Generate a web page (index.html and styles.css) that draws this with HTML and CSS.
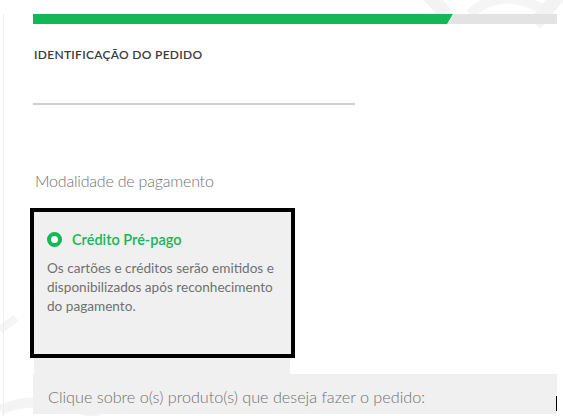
FILE: index.html
```html
<!DOCTYPE html>
<html lang="pt-BR">
<head>
<meta charset="utf-8">
<title>Pedido</title>
<link rel="stylesheet" href="styles.css">
</head>
<body>
<div class="page">
  <svg class="watermark" width="563" height="416" viewBox="0 0 563 416" aria-hidden="true">
    <path d="M424 -10 L446 14" stroke="#f3f3f3" stroke-width="14" fill="none"/>
    <path d="M560 -6 L535 24" stroke="#f3f3f3" stroke-width="14" fill="none"/>
    <path d="M470 14 Q500 -14 540 8" stroke="#f5f5f5" stroke-width="10" fill="none"/>
    <path d="M0 330 L16 318" stroke="#f5f5f5" stroke-width="8" fill="none"/>
    <path d="M0 410 Q40 392 100 416" stroke="#f4f4f4" stroke-width="10" fill="none"/>
  </svg>
  <div class="frame">
    <div class="progress">
      <div class="progress-done"></div>
      <div class="progress-rest"></div>
    </div>
    <h2 class="section-title">IDENTIFICAÇÃO DO PEDIDO</h2>
    <div class="text-field"></div>
    <p class="field-label">Modalidade de pagamento</p>
    <div class="option-box">
      <div class="option-head">
        <span class="radio"></span>
        <span class="option-title">Crédito Pré-pago</span>
      </div>
      <p class="option-desc">Os cartões e créditos serão emitidos e disponibilizados após reconhecimento do pagamento.</p>
    </div>
    <div class="option-tail"></div>
    <div class="products">
      <p class="products-text">Clique sobre o(s) produto(s) que deseja fazer o pedido:</p>
      <span class="cursor"></span>
    </div>
  </div>
</div>
</body>
</html>
```
FILE: styles.css
```css
* { box-sizing: border-box; }
html, body { margin: 0; padding: 0; background: #fff; }
body { font-family: Lato, "Open Sans", "Liberation Sans", sans-serif; }

.page {
  position: relative;
  width: 563px;
  height: 416px;
  overflow: hidden;
}

.watermark {
  position: absolute;
  left: 0;
  top: 0;
  z-index: 0;
}

.frame {
  position: relative;
  z-index: 1;
  margin: 14px 0 0 3px;
  border-left: 1px solid #eeeeee;
  padding-left: 29px;
  height: 402px;
}

.progress {
  display: flex;
  width: 524px;
  height: 10px;
}
.progress-done {
  width: 420px;
  background: #13b755;
  clip-path: polygon(0 0, 100% 0, 98.6% 100%, 0 100%);
}
.progress-rest {
  flex: 1;
  margin-left: -5px;
  background: #e3e3e3;
  clip-path: polygon(6px 0, 100% 0, 100% 100%, 0 100%);
}

.section-title {
  margin: 24px 0 0 1px;
  font-size: 12px;
  line-height: 14px;
  font-weight: 600;
  color: #3a3a3a;
  letter-spacing: 0.3px;
}

.text-field {
  width: 322px;
  height: 43px;
  border-bottom: 2px solid #cfcfcf;
}

.field-label {
  margin: 66px 0 0 2px;
  font-size: 16px;
  line-height: 20px;
  font-weight: 300;
  color: #707070;
  letter-spacing: -0.2px;
}

.option-box {
  margin: 17px 0 0 -3px;
  width: 265px;
  height: 150px;
  border: 4px solid #000;
  background: #f0f0f0;
  padding: 19px 0 0 13px;
}
.option-head {
  display: flex;
  align-items: center;
  gap: 10px;
}
.radio {
  width: 15px;
  height: 15px;
  border-radius: 50%;
  border: 4.5px solid #13b755;
  background: #fff;
}
.option-title {
  font-size: 14.5px;
  font-weight: 600;
  color: #13b755;
}
.option-desc {
  margin: 11px 0 0 0;
  width: 240px;
  font-size: 13.6px;
  line-height: 19px;
  color: #707070;
}

.option-tail {
  margin-left: 1px;
  width: 256px;
  height: 16px;
  background: #f0f0f0;
}

.products {
  position: relative;
  width: 524px;
  height: 40px;
  background: #f0f0f0;
  padding: 13px 0 0 15px;
}
.products-text {
  margin: 0;
  font-size: 16.2px;
  line-height: 20px;
  font-weight: 300;
  color: #707070;
}
.cursor {
  position: absolute;
  right: 0;
  top: 22px;
  width: 1.5px;
  height: 15px;
  background: #000;
}
```
